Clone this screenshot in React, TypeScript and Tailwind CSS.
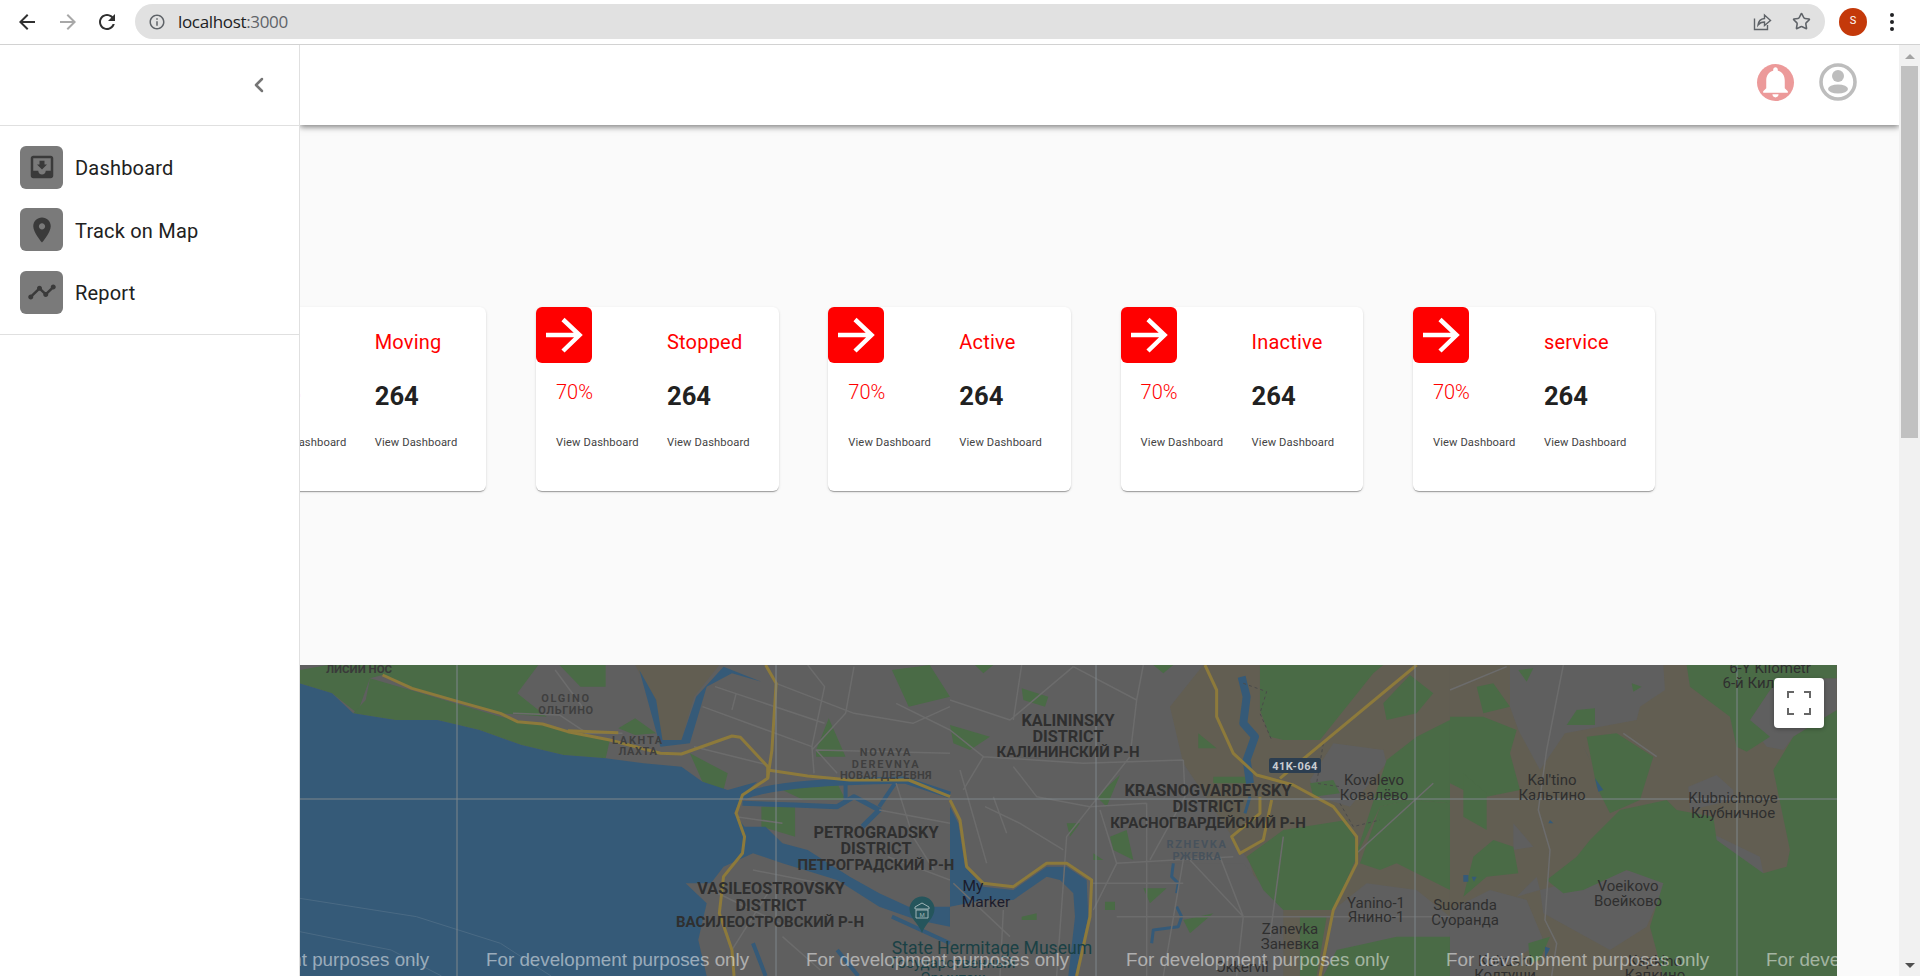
import { FC } from "react";
import { ChevronLeft, Star } from "lucide-react";

const menu = [
  {
    label: "Dashboard",
    icon: "M19 3H4.99c-1.11 0-1.98.9-1.98 2L3 19c0 1.1.88 2 1.99 2H19c1.1 0 2-.9 2-2V5c0-1.1-.9-2-2-2zm0 12h-4c0 1.66-1.35 3-3 3s-3-1.34-3-3H4.99V5H19v10zm-3-5h-2V7h-4v3H8l4 4 4-4z",
  },
  {
    label: "Track on Map",
    icon: "M12 2C8.13 2 5 5.13 5 9c0 5.25 7 13 7 13s7-7.75 7-13c0-3.87-3.13-7-7-7zm0 9.5c-1.38 0-2.5-1.12-2.5-2.5s1.12-2.5 2.5-2.5 2.5 1.12 2.5 2.5-1.12 2.5-2.5 2.5z",
  },
  {
    label: "Report",
    icon: "M23 8c0 1.1-.9 2-2 2-.18 0-.35-.02-.51-.07l-3.56 3.55c.05.16.07.34.07.52 0 1.1-.9 2-2 2s-2-.9-2-2c0-.18.02-.36.07-.52l-2.55-2.55c-.16.05-.34.07-.52.07s-.36-.02-.52-.07l-4.55 4.56c.05.16.07.33.07.51 0 1.1-.9 2-2 2s-2-.9-2-2 .9-2 2-2c.18 0 .35.02.51.07l4.56-4.55C8.02 9.36 8 9.18 8 9c0-1.1.9-2 2-2s2 .9 2 2c0 .18-.02.36-.07.52l2.55 2.55c.16-.05.34-.07.52-.07s.36.02.52.07l3.55-3.56C19.02 8.35 19 8.18 19 8c0-1.1.9-2 2-2s2 .9 2 2z",
  },
];

const cards = ["Moving", "Stopped", "Active", "Inactive", "service"];

const WATER = "#355a78";
const GREEN = "#4a6b46";
const TAN = "#625e52";
const ROAD = "#8d7a3b";
const STREET = "#6c6c6c";

// [text, x, y, size, weight, colour, letter spacing]
const labels: [string, number, number, number, number, string, number][] = [
  ["ЛИСИИ НОС", 359, 673, 11.5, 700, "#3a3a3a", 0],
  ["OLGINO", 566, 702, 11, 700, "#3f3f3f", 1.7],
  ["ОЛЬГИНО", 566, 714, 11, 700, "#3f3f3f", 0.6],
  ["LAKHTA", 638, 744, 11, 700, "#3f3f3f", 1.7],
  ["ЛАХТА", 638, 755, 11, 700, "#3f3f3f", 0.6],
  ["NOVAYA", 886, 756, 11, 700, "#3f3f3f", 1.7],
  ["DEREVNYA", 886, 768, 11, 700, "#3f3f3f", 1.7],
  ["НОВАЯ ДЕРЕВНЯ", 886, 779, 11, 700, "#3f3f3f", 0.3],
  ["PETROGRADSKY", 876, 838, 16.3, 700, "#2f2f2f", 0],
  ["DISTRICT", 876, 854, 16.3, 700, "#2f2f2f", 0],
  ["ПЕТРОГРАДСКИЙ Р-Н", 876, 870, 15, 700, "#2f2f2f", 0],
  ["VASILEOSTROVSKY", 771, 894, 16.3, 700, "#2f2f2f", 0],
  ["DISTRICT", 771, 911, 16.3, 700, "#2f2f2f", 0],
  ["ВАСИЛЕОСТРОВСКИЙ Р-Н", 770, 927, 15, 700, "#2f2f2f", 0],
  ["KALININSKY", 1068, 726, 16.3, 700, "#2f2f2f", 0],
  ["DISTRICT", 1068, 742, 16.3, 700, "#2f2f2f", 0],
  ["КАЛИНИНСКИЙ Р-Н", 1068, 757, 15, 700, "#2f2f2f", 0],
  ["KRASNOGVARDEYSKY", 1208, 796, 16.3, 700, "#2f2f2f", 0],
  ["DISTRICT", 1208, 812, 16.3, 700, "#2f2f2f", 0],
  ["КРАСНОГВАРДЕЙСКИЙ Р-Н", 1208, 828, 15, 700, "#2f2f2f", 0],
  ["RZHEVKA", 1197, 848, 11, 700, "#47525c", 1.7],
  ["РЖЕВКА", 1197, 860, 11, 700, "#47525c", 0.6],
  ["Kovalevo", 1374, 785, 15, 400, "#2f2f2f", 0],
  ["Ковалёво", 1374, 800, 15, 400, "#2f2f2f", 0],
  ["Yanino-1", 1376, 908, 15, 400, "#2f2f2f", 0],
  ["Янино-1", 1376, 922, 15, 400, "#2f2f2f", 0],
  ["Zanevka", 1290, 934, 15, 400, "#2f2f2f", 0],
  ["Заневка", 1290, 949, 15, 400, "#2f2f2f", 0],
  ["Okkervil", 1242, 972, 15, 400, "#2f2f2f", 0],
  ["Suoranda", 1465, 910, 15, 400, "#2f2f2f", 0],
  ["Суоранда", 1465, 925, 15, 400, "#2f2f2f", 0],
  ["6-Y Kilometr", 1770, 673, 15, 400, "#2f2f2f", 0],
  ["6-й Километр", 1770, 688, 15, 400, "#2f2f2f", 0],
  ["Kal'tino", 1552, 785, 15, 400, "#2f2f2f", 0],
  ["Кальтино", 1552, 800, 15, 400, "#2f2f2f", 0],
  ["Klubnichnoye", 1733, 803, 15, 400, "#2f2f2f", 0],
  ["Клубничное", 1733, 818, 15, 400, "#2f2f2f", 0],
  ["Voeikovo", 1628, 891, 15, 400, "#2f2f2f", 0],
  ["Воейково", 1628, 906, 15, 400, "#2f2f2f", 0],
  ["Koltushi", 1505, 966, 15, 400, "#2f2f2f", 0],
  ["Колтуши", 1505, 980, 15, 400, "#2f2f2f", 0],
  ["Kapkino", 1655, 966, 15, 400, "#2f2f2f", 0],
  ["Капкино", 1655, 980, 15, 400, "#2f2f2f", 0],
  ["My", 973, 891, 15.5, 400, "#1c1c2c", 0],
  ["Marker", 986, 907, 15.5, 400, "#1c1c2c", 0],
  ["State Hermitage Museum", 992, 954, 17.6, 400, "#1a4145", 0],
  ["Государственный", 953, 968, 15, 400, "#1a4145", 0],
  ["Эрмитаж", 953, 983, 15, 400, "#1a4145", 0],
];

const Line: FC<{ d: string; color?: string; width?: number }> = ({ d, color = STREET, width = 1.5 }) => (
  <path d={d} fill="none" stroke={color} strokeWidth={width} strokeLinejoin="round" vectorEffect="non-scaling-stroke" />
);

const MapDrawing: FC = () => (
  <svg viewBox="300 665 1537 311" className="block w-[1537px] h-[311px]">
    <rect x="300" y="665" width="1537" height="311" fill="#5f5f5f" />

    {/* west part, coordinates taken from a stretched crop */}
    <g transform="translate(290 650) scale(0.4209 0.3333)">
      <path fill={GREEN} d="M23 60L90 45H590L540 130L610 200L500 190L400 155L290 115L220 75L190 85L160 190L100 130L23 100Z" />
      <path fill={GREEN} d="M190 85L300 125L500 200L640 235L760 270L750 325L650 315L550 285L450 240L350 210L250 210L150 190L180 150Z" />
      <path fill={GREEN} d="M640 45H750V110H690ZM780 235L820 205L870 250L820 255ZM950 310L1040 370L1030 420L980 395Z" />
      <path fill={GREEN} d="M1430 60L1520 45L1568 140L1470 170ZM1250 300L1280 205L1320 320L1250 320ZM1120 470H1200L1200 560L1120 530ZM1170 420L1300 400L1320 450L1220 450Z" />
      <path fill={TAN} d="M590 45H1020L960 140L930 270L880 270L860 140L820 45Z" />
      <path fill={WATER} d="M23 100L100 130L150 190L250 210L350 210L450 240L550 285L650 315L750 325L840 340L930 350L980 395L1040 420L1110 395L1075 435L1055 490L1080 530L1130 530L1170 580L1230 600L1330 680L1400 730L1470 770L1568 770V830L1490 810L1400 770L1300 690L1170 640L1100 610L1030 650L1000 700L940 700L990 760L970 870L990 978H23Z" />
      <path fill={WATER} d="M830 60L870 150L885 270L930 270L965 140L1030 50L1120 95L1050 70L990 110L950 280L880 290Z" />
      <Line d="M1075 440C1150 400 1300 395 1460 390L1568 435" color={WATER} width={7} />
      <Line d="M1075 460L1200 465L1300 470L1340 440L1400 480L1360 530" color={WATER} width={5} />
      <Line d="M1320 390L1320 455M1440 395L1400 470" color={WATER} width={4} />
      <Line d="M1100 880L1130 978M1300 900L1350 978M1430 800L1568 880" color={WATER} width={4} />
      <Line d="M1155 100L1340 190L1480 220L1568 170M1010 110L1270 220M980 170L1240 290M1340 50L1320 190L1240 300M1230 45L1270 110L1240 290L1245 370M1060 130L1050 180M960 290L1135 345M1568 240L1440 160" />
      <Line d="M1440 400L1480 560L1530 660M1300 370L1250 300L1568 310M1568 520L1400 480M1420 620L1568 690M1100 660L1260 700M1140 720L1050 900M1170 860L1260 960M1000 720L1180 830M1060 500L1170 520" />
      <Line d="M530 190L640 195L700 245M630 60L700 180M700 250L790 250" />
      <Line d="M220 75L290 115L400 155L500 190L540 215L600 222L660 245L760 270L880 310L930 312L1050 258L1070 262L1135 350L1135 385L1075 435L1060 490L1080 560L1075 610L1030 680L1020 790L1050 900L1055 978" color={ROAD} width={3} />
      <Line d="M1130 45L1155 100L1145 300L1135 385M1135 360L1230 378L1330 390L1470 390L1568 440M660 242L780 248" color={ROAD} width={3} />
      <Line d="M23 745L300 800L500 880L620 978M23 845L240 900L360 978" color="#4a6a84" width={1} />
    </g>

    {/* middle part */}
    <g transform="translate(950 650) scale(0.3333)">
      <path fill={TAN} d="M660 170L760 45H1500V978H1000L900 640L700 340Z" />
      <path fill="#5f5f5f" d="M1080 390L1150 280L1300 300L1310 340L1200 470L1100 440ZM1150 780L1250 700L1400 720L1500 800V978H1120ZM880 640L1000 780L1000 978H600V640Z" />
      <path fill={GREEN} d="M930 45H1300L1270 70L1110 270H1000L960 260L930 180ZM1380 75L1450 130L1400 190L1310 210L1300 160ZM1310 330L1400 260L1500 210V460L1380 450L1290 470L1210 640L1310 330Z" />
      <path fill={GREEN} d="M890 620L1000 540L1190 510L1230 600L1150 780H1000L940 720ZM1230 640L1290 470L1380 450L1500 460V720L1340 640L1290 660ZM1050 800H1130L1100 978H1050ZM1160 900L1340 860L1500 860V978H1120Z" />
      <path fill={GREEN} d="M215 115L295 140L285 170L220 150ZM0 225L120 260L60 300L10 280ZM440 440L510 375L470 470ZM480 560L530 540L550 630L490 600ZM745 250L800 295H745ZM790 380H900V400H790ZM1080 400L1150 390L1170 430L1090 440ZM580 715L650 715L600 760ZM700 810L790 790L720 850ZM75 45H130L100 70ZM610 45H670L640 70ZM350 520L390 520L360 560ZM430 610L460 630H430ZM465 755L495 755V780H465ZM215 800L260 790V810H215Z" />
      <path fill={WATER} d="M0 470L25 520L45 650L100 710L190 720L290 650L350 650L410 690L415 800L375 978H355L375 800L370 730L330 690L290 680L190 750L100 750L0 770Z" />
      <Line d="M875 80L890 140L880 220L915 260L890 330L900 400" color={WATER} width={8} />
      <Line d="M900 440L885 490M670 640L665 680L685 700L680 730M680 770L695 800L685 830L610 840L605 880" color={WATER} width={3} />
      <Line d="M0 150L180 210L370 50M190 210L215 45M370 50L560 150L580 45M560 150L540 320L350 560L320 978M0 240L100 320L40 420M100 320L400 340L700 330M190 350L260 440L420 470L590 460M590 460L590 978M450 480L500 640L430 780M500 640L850 620M700 330L705 440L600 630M720 630L880 800M500 800H880M160 780L150 978M700 630L640 978M810 620L880 800M880 800L860 978" />
      <Line d="M105 470L210 520L340 600M30 360L110 640M10 700L180 860M420 700H700M130 440L170 550" />
      <Line d="M1220 610L1450 400M1000 560L960 860M880 800L1500 800" />
      <path d="M880 100L950 125L930 190L965 270M1120 280L1100 400L1170 410M1170 460L1210 530L1290 510" fill="none" stroke="#4a4a4a" strokeWidth={1} strokeDasharray="3 3" vectorEffect="non-scaling-stroke" />
      <Line d="M0 450L30 510L50 650L100 700L190 710L290 640L350 640L425 690L420 800L380 978" color={ROAD} width={3} />
      <Line d="M765 45L800 120L800 200L850 310L920 375L1030 405L1150 470L1220 560L1220 640L1150 780L1110 978M1400 45L990 385M930 440L930 490L845 560L870 610L940 570L965 450" color={ROAD} width={3} />
    </g>

    {/* east part */}
    <g transform="translate(1450 650) scale(0.3333)">
      <rect x="0" y="45" width="1161" height="933" fill={TAN} />
      <path fill="#5f5f5f" d="M180 45H640L645 120L570 170L560 210L345 250L270 360L205 240L180 170ZM715 410L800 375L850 420L850 450L720 480ZM385 690L520 660L655 680L590 830L480 900L280 790L270 720ZM795 555L930 620L940 670L860 660L795 600ZM960 120L1000 85H1160V180L1030 260L1000 300L950 290L895 215ZM190 520L250 590L190 600ZM230 50L250 45L230 90ZM0 780L120 720L230 750L280 870L120 978H0ZM200 740L260 680L270 720Z" />
      <path fill={GREEN} d="M0 200H100L200 240L180 310L210 420L110 440L60 430L0 400ZM80 110L130 100L180 170L100 190ZM410 260L500 250L610 320L570 450L480 490L440 410ZM350 225L380 180L435 175V225ZM205 60L250 55L230 95ZM545 100L575 110L550 125Z" />
      <path fill={GREEN} d="M420 570L510 480L650 450L680 480L790 500L800 570L940 670L1010 650L1020 600L970 360L1030 260L1161 180V978H640L600 830L640 700L530 660L400 720L340 730L290 690L380 620Z" />
      <path fill={GREEN} d="M720 110L840 200L860 290L890 305L960 260L900 210L960 120L1000 85H1160V45H710ZM130 570L190 590L205 670L110 680L40 740L70 620ZM40 370L110 430V540L40 500ZM235 880L300 860L270 930L240 940Z" />
      <path fill={WATER} d="M400 290L420 330L410 310ZM435 385L460 420L445 425ZM40 675H55V695H40ZM65 680H80L72 695ZM300 510L310 520H295ZM260 545L270 565ZM285 890L300 895L285 925Z" />
      <Line d="M340 45L290 300L265 480L300 600L285 810L320 880L305 978M0 120L170 50M520 250L620 320" />
    </g>

    {/* grid lines over the tiles */}
    <path d="M457 665V976M776 665V976M1096 665V976M1415 665V976M1737 665V976M300 799H1837" stroke="#7f868b" strokeWidth="1" fill="none" />

    <rect x="1269" y="758" width="52" height="15" rx="2" fill="#2c3e50" />
    <text x="1295" y="770" textAnchor="middle" fontFamily="Roboto, sans-serif" fontSize="11" fontWeight="700" fill="#c9ccd0" letterSpacing="0.5">
      41K-064
    </text>

    <g transform="translate(922 915)">
      <path d="M0 18C-3 9 -12.5 3 -12.5 -6A12.5 12.5 0 0 1 12.5 -6C12.5 3 3 9 0 18Z" fill="#25555c" />
      <path d="M-7 -8L0 -12L7 -8V-6H-7ZM-6 -5H6V3H-6Z" fill="none" stroke="#9fb4b6" strokeWidth="1" />
      <text x="0" y="2" textAnchor="middle" fontSize="6" fontFamily="Roboto, sans-serif" fill="#9fb4b6">
        M
      </text>
    </g>

    {labels.map(([text, x, y, size, weight, color, spacing], i) => (
      <text
        key={i}
        x={x}
        y={y}
        textAnchor="middle"
        fontFamily="Roboto, sans-serif"
        fontSize={size}
        fontWeight={weight}
        fill={color}
        letterSpacing={spacing}
      >
        {text}
      </text>
    ))}

    {[166, 486, 806, 1126, 1446, 1766].map((x) => (
      <text key={x} x={x} y="966" fontFamily="'Liberation Sans', Arial, sans-serif" fontSize="18.8" fill="#ffffff" fillOpacity="0.5">
        For development purposes only
      </text>
    ))}
  </svg>
);

const StatCard: FC<{ title: string }> = ({ title }) => (
  <div className="flex w-[242.5px] h-[184px] shrink-0 bg-white rounded-md shadow-[0_2px_1px_-1px_rgba(0,0,0,0.2),0_1px_1px_0_rgba(0,0,0,0.14),0_1px_3px_0_rgba(0,0,0,0.12)]">
    <div className="w-[131px]">
      <div className="flex items-center justify-center w-14 h-14 bg-[#ff0000] rounded-md">
        <svg viewBox="0 0 56 56" className="w-14 h-14" fill="none" stroke="white" strokeWidth="4.5">
          <path d="M10 28H43M27 12.5L43.5 28L27 44" />
        </svg>
      </div>
      <div className="mt-[17px] pl-5 text-[20px] leading-6 font-light text-[#ff0000]">70%</div>
      <div className="mt-[31px] pl-5 text-[11.2px] leading-4 tracking-[0.01em] text-[#444444]">View Dashboard</div>
    </div>
    <div className="pt-5">
      <div className="text-[20px] leading-[30px] tracking-[0.01em] text-[#ff0000]">{title}</div>
      <div className="mt-[21px] text-[25.6px] leading-9 font-bold text-[#212121]">264</div>
      <div className="mt-[21px] text-[11.2px] leading-4 tracking-[0.01em] text-[#444444]">View Dashboard</div>
    </div>
  </div>
);

const BrowserBar: FC = () => (
  <div className="flex items-center h-[45px] pb-px shrink-0 bg-white border-b border-[#d2d2d2]">
    <svg viewBox="0 0 24 24" className="w-6 h-6 ml-[15px] fill-[#303030]">
      <path d="M20 11H7.83l5.59-5.59L12 4l-8 8 8 8 1.41-1.41L7.83 13H20v-2z" />
    </svg>
    <svg viewBox="0 0 24 24" className="w-6 h-6 ml-[17px] fill-[#a8a8a8]">
      <path d="M12 4l-1.41 1.41L16.17 11H4v2h12.17l-5.58 5.59L12 20l8-8z" />
    </svg>
    <svg viewBox="0 0 24 24" className="w-6 h-6 ml-[15px] fill-[#303030]">
      <path d="M17.65 6.35C16.2 4.9 14.21 4 12 4c-4.42 0-7.99 3.58-7.99 8s3.57 8 7.99 8c3.73 0 6.84-2.55 7.73-6h-2.08c-.82 2.33-3.04 4-5.65 4-3.31 0-6-2.69-6-6s2.69-6 6-6c1.66 0 3.14.69 4.22 1.78L13 11h7V4l-2.35 2.35z" />
    </svg>
    <div className="flex items-center w-[1690px] h-[35px] ml-4 rounded-full bg-[#e1e1e1]">
      <svg viewBox="0 0 24 24" className="w-[18px] h-[18px] ml-[13px] fill-[#5f6368]">
        <path d="M11 7h2v2h-2zm0 4h2v6h-2zm1-9C6.48 2 2 6.48 2 12s4.48 10 10 10 10-4.48 10-10S17.52 2 12 2zm0 18c-4.41 0-8-3.59-8-8s3.59-8 8-8 8 3.59 8 8-3.59 8-8 8z" />
      </svg>
      <span className="ml-[12px] font-['Open_Sans',sans-serif] text-[17px] tracking-[-0.02em] text-[#202124]">
        localhost<span className="text-[#5f6368]">:3000</span>
      </span>
      <svg viewBox="0 0 20 20" className="w-5 h-5 ml-auto" fill="none" stroke="#5f6368" strokeWidth="1.4">
        <path d="M2.5 6.5V17.5H15.5V13M6 13C6.5 9 9 6.8 12.5 6.5V3L18.5 8.5L12.5 13.5V10C9.5 10 7.5 11 6 13Z" />
      </svg>
      <Star className="w-[19px] h-[19px] ml-[20px] mr-[14px] text-[#5f6368]" strokeWidth={2} />
    </div>
    <div className="flex items-center justify-center w-7 h-7 ml-[14px] rounded-full bg-[#c4390a] text-white text-[11px]">S</div>
    <div className="flex flex-col gap-[3px] ml-[23px]">
      <span className="w-1 h-1 rounded-full bg-[#202124]" />
      <span className="w-1 h-1 rounded-full bg-[#202124]" />
      <span className="w-1 h-1 rounded-full bg-[#202124]" />
    </div>
  </div>
);

const App: FC = () => {
  return (
    <div className="flex flex-col h-[976px] overflow-hidden bg-white font-['Roboto',sans-serif]">
      <BrowserBar />
      <div className="flex flex-1 min-h-0">
        <aside className="w-[300px] shrink-0 border-r border-[#e0e0e0] bg-white z-20">
          <div className="flex items-center justify-end h-[81px] pr-[28px] border-b border-[#e0e0e0]">
            <ChevronLeft className="w-6 h-6 text-[#757575]" strokeWidth={2.5} />
          </div>
          <div className="py-[10px] border-b border-[#e0e0e0]">
            {menu.map((item) => (
              <div key={item.label} className="flex items-center h-[62.5px] pl-5">
                <div className="flex items-center justify-center w-[43px] h-[43px] rounded-md bg-[#7a7a7a]">
                  <svg viewBox="0 0 24 24" className="w-[30px] h-[30px] fill-[#3a3a3a]">
                    <path d={item.icon} />
                  </svg>
                </div>
                <span className="ml-[12px] pt-[2px] text-[20px] tracking-[0.01em] text-[#212121]">{item.label}</span>
              </div>
            ))}
          </div>
        </aside>

        <main className="flex-1 min-w-0 overflow-hidden bg-[#fafafa]">
          <header className="relative z-10 flex items-center justify-end h-20 pr-[42px] pb-[6px] bg-white shadow-[0_2px_6px_rgba(0,0,0,0.5)]">
            <div className="flex items-center justify-center w-[37px] h-[37px] rounded-full bg-[#ec9a9a]">
              <svg viewBox="0 0 24 24" className="w-[38px] h-[38px] fill-white">
                <path d="M12 22c1.1 0 2-.9 2-2h-4c0 1.1.89 2 2 2zm6-6v-5c0-3.07-1.64-5.64-4.5-6.32V4c0-.83-.67-1.5-1.5-1.5s-1.5.67-1.5 1.5v.68C7.63 5.36 6 7.92 6 11v5l-2 2v1h16v-1l-2-2z" />
              </svg>
            </div>
            <svg viewBox="0 0 38 38" className="w-[38px] h-[38px] ml-[25px]">
              <circle cx="19" cy="19" r="17" fill="none" stroke="#bdbdbd" strokeWidth="3.6" />
              <circle cx="19" cy="13" r="6" fill="#bdbdbd" />
              <ellipse cx="19" cy="26" rx="10" ry="4.5" fill="#bdbdbd" />
            </svg>
          </header>

          <div className="flex gap-[49.8px] -ml-[56.3px] mt-[182px]">
            {cards.map((title) => (
              <StatCard key={title} title={title} />
            ))}
          </div>

          <div className="relative w-[1537px] mt-[174px]">
            <MapDrawing />
            <div className="absolute left-[1474px] top-[13px] flex items-center justify-center w-[50px] h-[50px] rounded-sm bg-white shadow-[0_1px_4px_rgba(0,0,0,0.3)]">
              <svg viewBox="0 0 24 24" className="w-[24px] h-[24px]" fill="none" stroke="#666666" strokeWidth="2">
                <path d="M1 7V1H7M17 1H23V7M23 17V23H17M7 23H1V17" />
              </svg>
            </div>
          </div>
        </main>

        <div className="flex flex-col items-center w-[21px] shrink-0 bg-[#f1f1f1]">
          <div className="mt-[9px] w-0 h-0 border-x-[5px] border-x-transparent border-b-[5px] border-b-[#a3a3a3]" />
          <div className="w-[17px] h-[372px] mt-[7px] bg-[#c1c1c1]" />
          <div className="mt-auto mb-[8px] w-0 h-0 border-x-[5px] border-x-transparent border-t-[5px] border-t-[#505050]" />
        </div>
      </div>
    </div>
  );
};

export default App;
